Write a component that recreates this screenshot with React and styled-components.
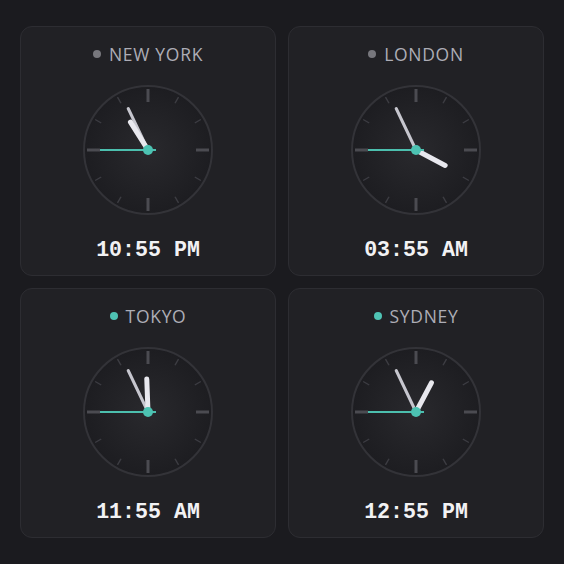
import React from "react";
import styled, { createGlobalStyle } from "styled-components";

const Global = createGlobalStyle`
  html, body { margin: 0; padding: 0; background: #1b1b1f; }
  #root { min-height: 100vh; }
`;

const Page = styled.div`
  min-height: 100vh;
  display: flex;
  align-items: center;
  justify-content: center;
  padding: 0 20px;
  box-sizing: border-box;
`;

const Grid = styled.div`
  display: grid;
  grid-template-columns: repeat(2, 256px);
  grid-auto-rows: 250px;
  gap: 12px;
`;

const Card = styled.div`
  box-sizing: border-box;
  background: #212125;
  border: 1px solid #2d2d32;
  border-radius: 12px;
  padding: 16px 16px 12px;
  display: flex;
  flex-direction: column;
  align-items: center;
`;

const Title = styled.div`
  display: flex;
  align-items: center;
  gap: 8px;
  height: 22px;
  font-family: "Open Sans", "Noto Sans", sans-serif;
  font-size: 17.5px;
  line-height: 22px;
  letter-spacing: 0.7px;
  color: #adadb6;
  text-transform: uppercase;
`;

const Dot = styled.span`
  width: 8px;
  height: 8px;
  border-radius: 50%;
  background: ${(p) => (p.$day ? "#4fc3b4" : "#77777d")};
`;

const Face = styled.svg`
  margin-top: 20px;
  width: 130px;
  height: 130px;
  display: block;
`;

const Time = styled.div`
  margin-top: 22px;
  height: 26px;
  font-family: "Liberation Mono", "DejaVu Sans Mono", monospace;
  font-weight: 700;
  font-size: 21.6px;
  line-height: 26px;
  color: #f2f2f4;
`;

const clocks = [
  { city: "New York", h: 22, m: 55, s: 45 },
  { city: "London", h: 3, m: 55, s: 45 },
  { city: "Tokyo", h: 11, m: 55, s: 45 },
  { city: "Sydney", h: 12, m: 55, s: 45 },
];

const pol = (deg, r) => {
  const a = ((deg - 90) * Math.PI) / 180;
  return [r * Math.cos(a), r * Math.sin(a)];
};

function Clock({ h, m, s, id }) {
  const hourA = ((h % 12) + m / 60 + s / 3600) * 30;
  const minA = (m + s / 60) * 6;
  const secA = s * 6;
  const ticks = [];
  for (let i = 0; i < 12; i++) {
    const major = i % 3 === 0;
    const [x1, y1] = pol(i * 30, major ? 48 : 54);
    const [x2, y2] = pol(i * 30, 61);
    ticks.push(
      <line
        key={i}
        x1={x1}
        y1={y1}
        x2={x2}
        y2={y2}
        stroke={major ? "#4b4b51" : "#3d3d43"}
        strokeWidth={major ? 3 : 1.4}
        strokeLinecap="butt"
      />
    );
  }
  const [hx, hy] = pol(hourA, 33);
  const [mx, my] = pol(minA, 46);
  const [sx, sy] = pol(secA, 48);
  const [tx, ty] = pol(secA + 180, 8);
  return (
    <Face viewBox="-65 -65 130 130">
      <defs>
        <radialGradient id={id} cx="50%" cy="50%" r="50%">
          <stop offset="0%" stopColor="#29292d" />
          <stop offset="100%" stopColor="#1d1d21" />
        </radialGradient>
      </defs>
      <circle r="64" fill={`url(#${id})`} stroke="#333338" strokeWidth="2" />
      {ticks}
      <line x1="0" y1="0" x2={mx} y2={my} stroke="#c6c6ce" strokeWidth="3" strokeLinecap="round" />
      <line x1="0" y1="0" x2={hx} y2={hy} stroke="#e8e8ee" strokeWidth="5" strokeLinecap="round" />
      <line x1={tx} y1={ty} x2={sx} y2={sy} stroke="#4cbfae" strokeWidth="2" />
      <circle r="5" fill="#4cc2b2" />
    </Face>
  );
}

const pad = (n) => String(n).padStart(2, "0");

export default function App() {
  return (
    <>
      <Global />
      <Page>
        <Grid>
          {clocks.map((c, i) => {
            const day = c.h >= 6 && c.h < 18;
            const h12 = c.h % 12 === 0 ? 12 : c.h % 12;
            return (
              <Card key={c.city}>
                <Title>
                  <Dot $day={day} />
                  {c.city}
                </Title>
                <Clock h={c.h} m={c.m} s={c.s} id={`g${i}`} />
                <Time>
                  {pad(h12)}:{pad(c.m)} {c.h >= 12 ? "PM" : "AM"}
                </Time>
              </Card>
            );
          })}
        </Grid>
      </Page>
    </>
  );
}
